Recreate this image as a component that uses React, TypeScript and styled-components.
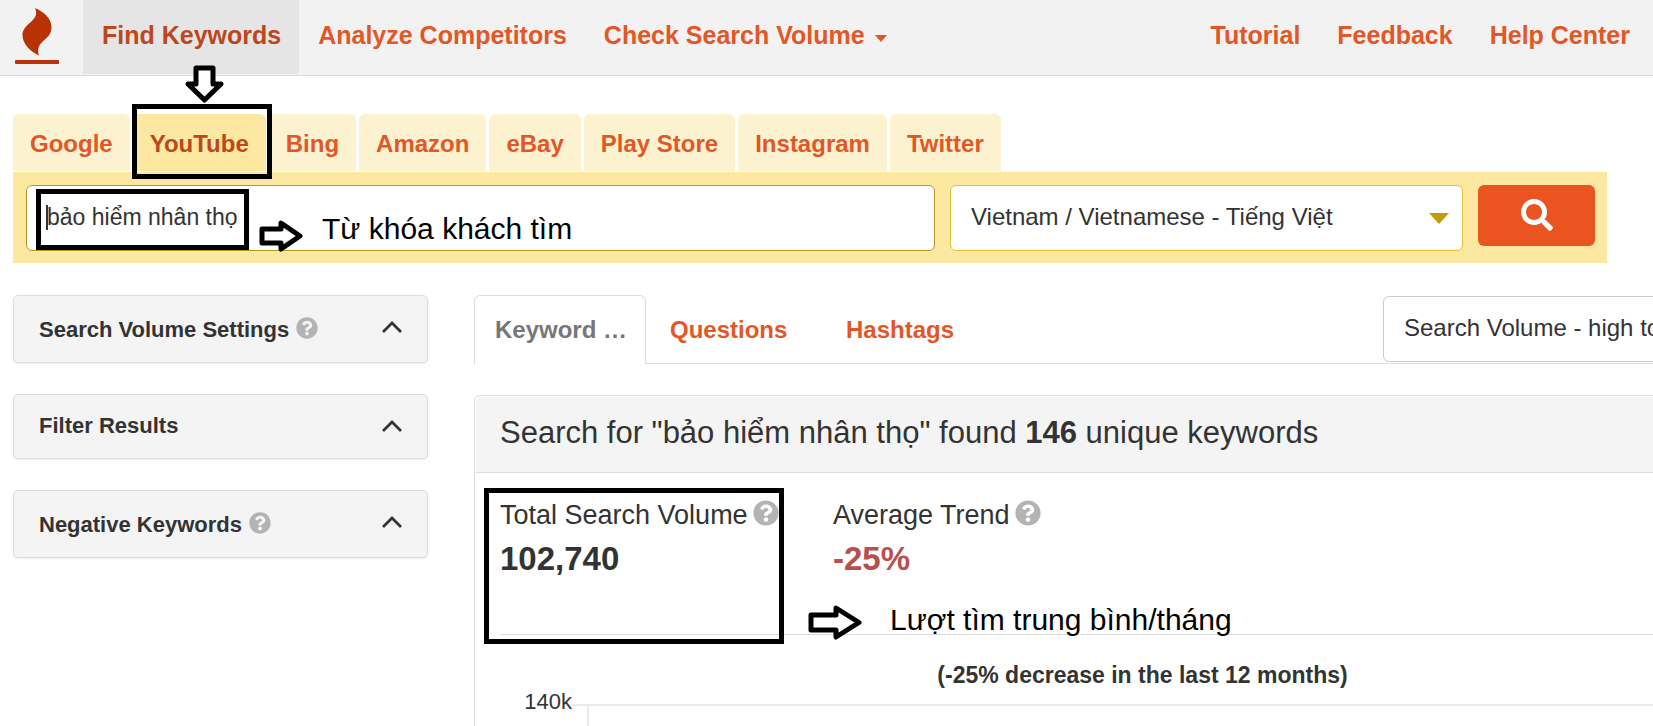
import React from 'react';
import styled, { createGlobalStyle, css } from 'styled-components';
import { FaQuestionCircle, FaSearch } from 'react-icons/fa';

const line = '#dcdcdc';
const orange = '#e35726';

const GlobalStyle = createGlobalStyle`
  *, *::before, *::after { box-sizing: border-box; }
  body { margin: 0; background: #fff; color: #333; font-family: "Liberation Sans", Arial, sans-serif; font-size: 24px; line-height: 32px; }
  button, input, select { font: inherit; color: inherit; }
`;

const Page = styled.div`
  min-height: 100vh;
  max-height: 100vh;
  overflow: hidden;
`;

const Header = styled.header`
  display: flex;
  height: 76px;
  padding-right: 5px;
  background: #f2f2f2;
  border-bottom: 1px solid ${line};
`;

const Logo = styled.a`
  flex: none;
  width: 83px;
  padding: 8px 0 0 15px;
  svg { display: block; }
`;

const Nav = styled.nav`
  display: flex;
  height: 74px;
`;

const NavLink = styled.a<{ $active?: boolean }>`
  display: flex;
  align-items: center;
  gap: 10px;
  padding: 0 18px 4px 19px;
  font-size: 25px;
  font-weight: 700;
  text-decoration: none;
  white-space: nowrap;
  color: ${p => (p.$active ? '#bd471c' : orange)};
  background: ${p => (p.$active ? '#e5e5e5' : 'transparent')};
`;

const UtilityNav = styled(Nav)`
  margin-left: auto;
`;

const Caret = styled.span`
  border: 6px solid transparent;
  border-top: 7px solid ${orange};
  border-bottom: 0;
  margin-top: 6px;
`;

const SearchArea = styled.section`
  margin: 38px 46px 0 13px;
`;

const SourceTabs = styled.div`
  display: flex;
  gap: 3px;
  margin-bottom: 1px;
`;

const SourceTab = styled.button<{ $active?: boolean }>`
  position: relative;
  height: 57px;
  padding: 2px 17px 0;
  border: 0;
  border-radius: 6px 6px 0 0;
  font-weight: 700;
  white-space: nowrap;
  color: ${p => (p.$active ? '#bd471c' : orange)};
  background: ${p => (p.$active ? '#fde8a1' : '#fcf2d0')};
`;

const SearchForm = styled.form`
  display: flex;
  align-items: flex-start;
  gap: 15px;
  padding: 13px 12px 12px 13px;
  background: #fde8a1;
`;

const QueryField = styled.div`
  position: relative;
  flex: 909 1 0;
`;

const field = css`
  display: block;
  width: 100%;
  height: 66px;
  padding: 0 20px 2px;
  border-radius: 6px;
  background: #fff;
  outline: none;
`;

const QueryInput = styled.input`
  ${field}
  border: 1px solid #b8971f;
  font-size: 23px;
`;

const TextCursor = styled.span`
  position: absolute;
  left: 20px;
  top: 20px;
  width: 2px;
  height: 25px;
  background: #333;
`;

const RegionField = styled.div`
  position: relative;
  flex: 513 1 0;
`;

const Select = styled.select<{ $tone: string }>`
  ${field}
  appearance: none;
  border: 1px solid ${p => p.$tone};
`;

const SelectArrow = styled.span`
  position: absolute;
  right: 14px;
  top: 28px;
  border: 10px solid transparent;
  border-top: 11px solid #c29c05;
  border-bottom: 0;
  pointer-events: none;
`;

const SearchButton = styled.button`
  flex: 117 1 0;
  display: flex;
  align-items: center;
  justify-content: center;
  height: 61px;
  padding: 0 0 2px;
  border: 0;
  border-radius: 6px;
  color: #fff;
  background: #e95420;
`;

const Columns = styled.div`
  display: flex;
  align-items: flex-start;
  gap: 46px;
  margin: 32px 0 0 13px;
`;

const Sidebar = styled.aside`
  flex: none;
  width: 415px;
  display: flex;
  flex-direction: column;
  gap: 31px;
`;

const Chevron = styled.svg`
  margin-left: auto;
`;

const Disclosure = styled.button<{ $help?: boolean }>`
  display: flex;
  align-items: center;
  height: ${p => (p.$help ? 68 : 65)}px;
  padding: ${p => (p.$help ? '4px' : '0')} 25px 2px 25px;
  border: 1px solid ${line};
  border-radius: 5px;
  background: #f4f4f4;
  box-shadow: 0 1px 2px rgba(0, 0, 0, 0.08);
  font-size: 22px;
  font-weight: 700;
  text-align: left;

  ${Chevron} {
    margin-bottom: ${p => (p.$help ? 6 : 0)}px;
  }
`;

const HelpIcon = styled(FaQuestionCircle)`
  flex: none;
  margin: 0 0 4px 7px;
  color: #b3b3b3;
`;

const Main = styled.main`
  flex: 1;
  min-width: 0;
  margin-right: -158px;
`;

const ResultBar = styled.div`
  display: flex;
  height: 69px;
  border-bottom: 1px solid ${line};
`;

const ResultTab = styled.button<{ $active?: boolean }>`
  height: 69px;
  width: ${p => (p.$active ? 172 : 176)}px;
  padding: 0 0 0 ${p => (p.$active ? 20 : 23)}px;
  border: 1px solid ${p => (p.$active ? line : 'transparent')};
  border-bottom: 0;
  border-radius: 6px 6px 0 0;
  background: ${p => (p.$active ? '#fff' : 'transparent')};
  color: ${p => (p.$active ? '#777' : orange)};
  font-weight: 700;
  text-align: left;
  white-space: nowrap;
`;

const SortField = styled.div`
  width: 428px;
  margin: 1px 0 0 auto;
`;

const Panel = styled.section`
  margin-top: 31px;
  border: 1px solid ${line};
  border-radius: 6px;
`;

const PanelTitle = styled.h2`
  margin: 1px 1px 0;
  padding: 16px 24px 19px;
  border-bottom: 1px solid ${line};
  border-radius: 5px 5px 0 0;
  background: #f4f4f4;
  font-size: 31px;
  line-height: 40px;
  font-weight: 400;
`;

const Stats = styled.div`
  position: relative;
  display: flex;
  margin: 0 25px;
  height: 162px;
  padding-top: 22px;
  border-bottom: 1px solid ${line};
`;

const Stat = styled.div`
  width: 333px;
`;

const StatLabel = styled.div`
  display: flex;
  align-items: center;
  font-size: 27px;
  line-height: 40px;

  ${HelpIcon} {
    margin-left: 5px;
  }
`;

const StatValue = styled.div<{ $negative?: boolean }>`
  margin-top: 4px;
  font-size: 33px;
  line-height: 40px;
  font-weight: 700;
  color: ${p => (p.$negative ? '#b94f4c' : '#333')};
`;

const Chart = styled.figure`
  margin: 0 25px;
`;

const ChartCaption = styled.figcaption`
  padding: 24px 0 11px;
  text-align: center;
  font-size: 23px;
  font-weight: 700;
`;

const Plot = styled.div`
  display: flex;
  height: 200px;
`;

const Tick = styled.span`
  width: 72px;
  margin-top: -12px;
  font-size: 22px;
  line-height: 24px;
  text-align: right;
`;

const TickMark = styled.span`
  width: 15px;
  margin-top: 2px;
  border-top: 2px solid #eaeaea;
`;

const Grid = styled.div`
  flex: 1;
  margin-top: 2px;
  border: solid #eaeaea;
  border-width: 2px 0 0 2px;
`;

/* Hand-drawn style annotations that sit over the page. */
const Frame = styled.span<{ $box: [number, number, number, number] }>`
  position: absolute;
  z-index: 2;
  left: ${p => p.$box[0]}px;
  top: ${p => p.$box[1]}px;
  width: ${p => p.$box[2]}px;
  height: ${p => p.$box[3]}px;
  border: 5px solid #000;
  pointer-events: none;
`;

const ArrowSvg = styled.svg<{ $x: number; $y: number }>`
  position: absolute;
  z-index: 2;
  left: ${p => p.$x}px;
  top: ${p => p.$y}px;
  fill: #fff;
  stroke: #000;
  stroke-width: 5;
  stroke-linejoin: round;
`;

const Note = styled.span<{ $x: number; $y: number }>`
  position: absolute;
  z-index: 2;
  left: ${p => p.$x}px;
  top: ${p => p.$y}px;
  color: #000;
  font-size: 30px;
  line-height: 36px;
  white-space: nowrap;
`;

const sources = ['Google', 'YouTube', 'Bing', 'Amazon', 'eBay', 'Play Store', 'Instagram', 'Twitter'];

const settings = [
  { label: 'Search Volume Settings', help: true },
  { label: 'Filter Results', help: false },
  { label: 'Negative Keywords', help: true },
];

export default function App() {
  return (
    <Page>
      <GlobalStyle />
      <Header>
        <Logo href="#" aria-label="Home">
          <svg width="44" height="56" viewBox="0 0 44 56" fill="#b83205">
            <path d="M20 0C29 4 36.500 10 36.500 19.500C36.500 33 19.500 32 24 47.500C15 43 7.500 36 7.500 27C7.500 15 26 13 20 0Z" />
            <rect y="52" width="44" height="4" rx="1" />
          </svg>
        </Logo>
        <Nav>
          <NavLink href="#" $active>Find Keywords</NavLink>
          <NavLink href="#">Analyze Competitors</NavLink>
          <NavLink href="#">Check Search Volume<Caret /></NavLink>
        </Nav>
        <UtilityNav>
          <NavLink href="#">Tutorial</NavLink>
          <NavLink href="#">Feedback</NavLink>
          <NavLink href="#">Help Center</NavLink>
        </UtilityNav>
      </Header>

      <SearchArea>
        <SourceTabs>
          {sources.map(name => (
            <SourceTab key={name} type="button" $active={name === 'YouTube'}>
              {name}
              {name === 'YouTube' && (
                <>
                  <Frame $box={[-1, -10, 140, 75]} />
                  <ArrowSvg $x={51} $y={-50} width="41" height="40" viewBox="0 0 41 40">
                    <path d="M12 4H29V20H37L20.500 36L4 20H12Z" />
                  </ArrowSvg>
                </>
              )}
            </SourceTab>
          ))}
        </SourceTabs>
        <SearchForm onSubmit={e => e.preventDefault()}>
          <QueryField>
            <QueryInput aria-label="Keyword" defaultValue="bảo hiểm nhân thọ" />
            <TextCursor />
            <Frame $box={[10, 4, 213, 61]} />
            <ArrowSvg $x={232} $y={34} width="46" height="34" viewBox="0 0 46 34">
              <path d="M4 10H23V4L42 17L23 30V24H4Z" />
            </ArrowSvg>
            <Note $x={296} $y={26}>Từ khóa khách tìm</Note>
          </QueryField>
          <RegionField>
            <Select aria-label="Country and language" $tone="#e3c02f">
              <option>Vietnam / Vietnamese - Tiếng Việt</option>
            </Select>
            <SelectArrow />
          </RegionField>
          <SearchButton type="submit" aria-label="Search"><FaSearch size={32} /></SearchButton>
        </SearchForm>
      </SearchArea>

      <Columns>
        <Sidebar>
          {settings.map(item => (
            <Disclosure key={item.label} type="button" $help={item.help}>
              {item.label}
              {item.help && <HelpIcon size={22} />}
              <Chevron width="20" height="14" viewBox="0 0 20 14" fill="none" stroke="#333" strokeWidth="2.800">
                <path d="M1 12L10 3L19 12" />
              </Chevron>
            </Disclosure>
          ))}
        </Sidebar>
        <Main>
          <ResultBar>
            <ResultTab type="button" $active>Keyword …</ResultTab>
            <ResultTab type="button">Questions</ResultTab>
            <ResultTab type="button">Hashtags</ResultTab>
            <SortField>
              <Select aria-label="Sort by" $tone="#ccc">
                <option>Search Volume - high to low</option>
              </Select>
            </SortField>
          </ResultBar>
          <Panel>
            <PanelTitle>Search for "bảo hiểm nhân thọ" found <b>146</b> unique keywords</PanelTitle>
            <Stats>
              <Stat>
                <StatLabel>Total Search Volume<HelpIcon size={26} /></StatLabel>
                <StatValue>102,740</StatValue>
              </Stat>
              <Stat>
                <StatLabel>Average Trend<HelpIcon size={26} /></StatLabel>
                <StatValue $negative>-25%</StatValue>
              </Stat>
              <Frame $box={[-16, 15, 300, 156]} />
              <ArrowSvg $x={307} $y={131} width="56" height="37" viewBox="0 0 56 37">
                <path d="M4 11H29V4L52 18.500L29 33V26H4Z" />
              </ArrowSvg>
              <Note $x={390} $y={129}>Lượt tìm trung bình/tháng</Note>
            </Stats>
            <Chart>
              <ChartCaption>(-25% decrease in the last 12 months)</ChartCaption>
              <Plot>
                <Tick>140k</Tick>
                <TickMark />
                <Grid />
              </Plot>
            </Chart>
          </Panel>
        </Main>
      </Columns>
    </Page>
  );
}
